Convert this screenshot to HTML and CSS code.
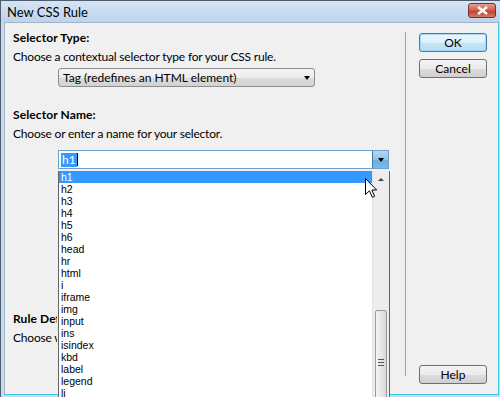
FILE: index.html
```html
<!DOCTYPE html>
<html lang="en">
<head>
    <meta charset="UTF-8">
    <title>New CSS Rule</title>
    <link rel="stylesheet" href="styles.css">
</head>
<body>
    <div class="window">
        <div class="titlebar">
            <span class="title">New CSS Rule</span>
            <div class="close-btn">
                <svg width="13" height="9" viewBox="0 0 13 9"><path d="M2 1 L11 8 M11 1 L2 8" stroke="#fff" stroke-width="2.4"/></svg>
            </div>
        </div>
        <div class="client">
            <div class="main">
                <h3 class="section-title">Selector Type:</h3>
                <p class="hint">Choose a contextual selector type for your CSS rule.</p>
                <div class="select-box">
                    <span>Tag (redefines an HTML element)</span>
                    <span class="tri"></span>
                </div>

                <h3 class="section-title name-title">Selector Name:</h3>
                <p class="hint">Choose or enter a name for your selector.</p>
                <div class="combo">
                    <span class="combo-text"><span class="sel">h1</span><span class="caret"></span></span>
                    <span class="combo-btn"><span class="tri"></span></span>
                </div>

                <!-- caché en partie par la liste ouverte -->
                <div class="rule-def">
                    <h3 class="section-title">Rule Definition:</h3>
                    <p class="hint">Choose where your rule will be defined.</p>
                </div>
            </div>
            <div class="divider"></div>
            <div class="side">
                <button class="btn btn-ok">OK</button>
                <button class="btn">Cancel</button>
                <button class="btn btn-help">Help</button>
            </div>
        </div>

        <!-- liste déroulante ouverte par dessus la boîte -->
        <div class="dropdown">
            <ul class="options">
                <li class="active">h1</li>
                <li>h2</li>
                <li>h3</li>
                <li>h4</li>
                <li>h5</li>
                <li>h6</li>
                <li>head</li>
                <li>hr</li>
                <li>html</li>
                <li>i</li>
                <li>iframe</li>
                <li>img</li>
                <li>input</li>
                <li>ins</li>
                <li>isindex</li>
                <li>kbd</li>
                <li>label</li>
                <li>legend</li>
                <li>li</li>
            </ul>
            <div class="scrollbar">
                <span class="up"></span>
                <div class="thumb">
                    <span class="grip"></span>
                </div>
            </div>
        </div>

        <svg class="cursor" width="13" height="21" viewBox="0 0 13 21">
            <path d="M0.5 0.5 L0.5 16.5 L4.5 12.8 L7.3 19.3 L9.6 18.3 L6.9 12 L11.7 12 Z" fill="#fff" stroke="#000" stroke-width="1" stroke-linejoin="round"/>
        </svg>
    </div>
</body>
</html>
```

FILE: styles.css
```css
body {
    margin: 0;
    padding: 0;
    background: #fff;
    font-family: 'Lato', sans-serif;
    font-size: 12px;
    color: #000;
}
.window {
    position: relative;
    width: 500px;
    height: 397px;
    box-sizing: border-box;
    display: flex;
    flex-direction: column;
    background: #c7dbef;
    border-top: 1px solid #4f5d6c;
    border-left: 1px solid #4f5d6c;
    overflow: hidden;
}
.titlebar {
    height: 21px;
    flex-shrink: 0;
    display: flex;
    align-items: center;
    justify-content: space-between;
    background: linear-gradient(#d4e4f5, #bdd4ec);
    padding: 0 4px 0 6px;
}
.title {
    font-size: 13px;
    color: #000;
}
.close-btn {
    width: 26px;
    height: 13px;
    margin-top: -2px;
    border: 1px solid #7d2a22;
    border-radius: 3px;
    background: linear-gradient(#e2a195, #cf5a4a 50%, #c03c2c 51%, #d67a62);
    display: flex;
    align-items: center;
    justify-content: center;
}
.client {
    flex: 1;
    display: flex;
    margin: 0 1px 2px 3px;
    background: #f0f0f0;
    border: 1px solid #9fb3c9;
    border-bottom-color: #36c6ee;
    border-right-color: #36c6ee;
}
.main {
    width: 392px;
    padding: 8px 0 0 8px;
}
.section-title {
    margin: 0;
    font-size: 12px;
    line-height: 14px;
    font-weight: bold;
    letter-spacing: 0.1px;
}
.hint {
    margin: 5px 0 0;
    line-height: 14px;
    letter-spacing: -0.2px;
}
.select-box {
    margin: 4px 0 0 45px;
    width: 257px;
    height: 19px;
    box-sizing: border-box;
    border: 1px solid #8d8d8d;
    border-radius: 3px;
    background: linear-gradient(#f4f4f4, #ececec 50%, #dcdcdc 51%, #d2d2d2);
    display: flex;
    align-items: center;
    justify-content: space-between;
    padding: 0 4px 0 4px;
}
.tri {
    width: 0;
    height: 0;
    border-left: 3.5px solid transparent;
    border-right: 3.5px solid transparent;
    border-top: 4px solid #000;
}
.name-title {
    margin-top: 21px;
}
.combo {
    margin: 9px 0 0 45px;
    width: 331px;
    height: 19px;
    box-sizing: border-box;
    border: 1px solid #6f9fd0;
    background: #fff;
    display: flex;
    justify-content: space-between;
}
.combo-text {
    display: flex;
    align-items: center;
    padding-left: 2px;
}
.sel {
    background: #3399ff;
    color: #fff;
    padding: 0 1px;
    line-height: 14px;
}
.caret {
    width: 1px;
    height: 13px;
    background: #000;
}
.combo-btn {
    width: 15px;
    background: linear-gradient(#b3d8f3, #8cc3ea 50%, #6cadde 51%, #7cb9e4);
    border-left: 1px solid #3d7bad;
    display: flex;
    align-items: center;
    justify-content: center;
}
.rule-def {
    margin-top: 143px;
    width: 44px;
    overflow: hidden;
    white-space: nowrap;
}
.divider {
    width: 1px;
    background: #a0a0a0;
    margin: 9px 0 18px;
}
.side {
    flex: 1;
    display: flex;
    flex-direction: column;
    gap: 7px;
    padding: 10px 0 10px 13px;
}
.btn {
    width: 68px;
    height: 19px;
    border: 1px solid #707070;
    border-radius: 3px;
    background: linear-gradient(#f3f3f3, #ebebeb 50%, #dddddd 51%, #cfcfcf);
    font-family: 'Lato', sans-serif;
    font-size: 12px;
    color: #000;
    padding: 0;
}
.btn-ok {
    border-color: #3c7fb1;
    box-shadow: inset 0 0 0 1px #a6dbf7;
    background: linear-gradient(#ebf6fc, #dcf0fb 50%, #c4e5f8 51%, #b7dcf3);
}
.btn-help {
    margin-top: auto;
}
.dropdown {
    position: absolute;
    left: 57px;
    top: 170px;
    width: 332px;
    height: 240px;
    box-sizing: border-box;
    border-left: 1px solid #646464;
    border-right: 1px solid #646464;
    background: #fff;
    display: flex;
}
.options {
    list-style: none;
    margin: 0;
    padding: 0;
    flex: 1;
    font-family: 'Liberation Sans', sans-serif;
    font-size: 10.5px;
}
.options li {
    height: 12px;
    line-height: 13px;
    padding-left: 2px;
}
.options li.active {
    background: #3399ff;
    color: #fff;
}
.scrollbar {
    width: 16px;
    background: #ededed;
    border-left: 1px solid #e2e2e2;
    display: flex;
    flex-direction: column;
    align-items: center;
}
.up {
    margin-top: 7px;
    width: 0;
    height: 0;
    border-left: 3px solid transparent;
    border-right: 3px solid transparent;
    border-bottom: 3px solid #444;
}
.thumb {
    margin-top: 129px;
    width: 12px;
    height: 120px;
    box-sizing: border-box;
    border: 1px solid #9a9a9a;
    border-radius: 2px;
    background: linear-gradient(90deg, #f4f4f4, #e8e8e8 50%, #d8d8d8);
    display: flex;
    justify-content: center;
}
.grip {
    margin-top: 48px;
    width: 6px;
    height: 7px;
    background: repeating-linear-gradient(#555 0 1px, transparent 1px 3px);
}
.cursor {
    position: absolute;
    left: 364px;
    top: 177px;
}
```
